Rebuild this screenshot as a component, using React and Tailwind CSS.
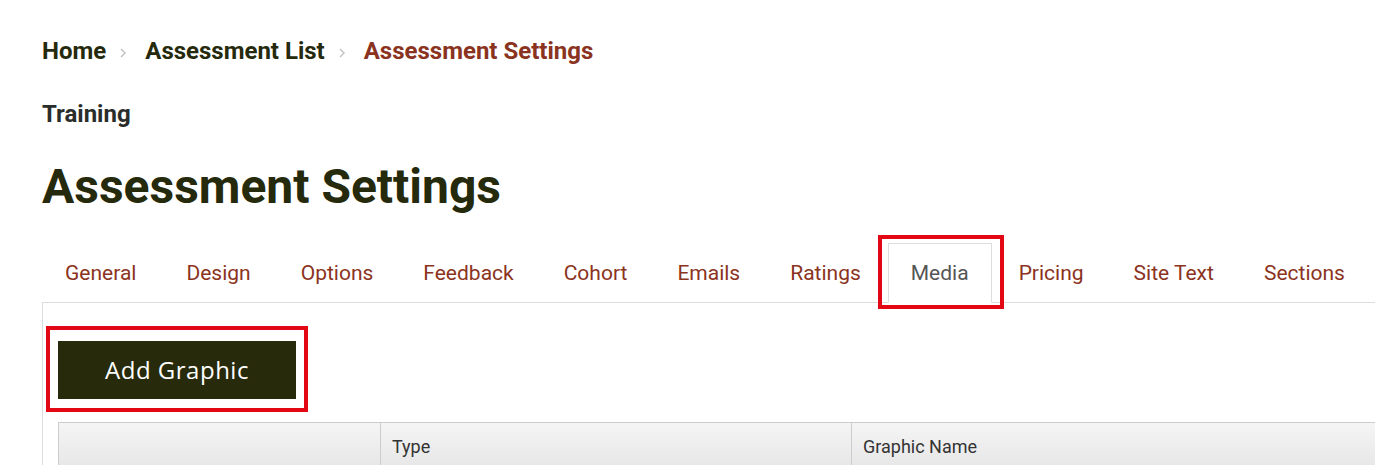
import React from "react";

const tabs = ["General", "Design", "Options", "Feedback", "Cohort", "Emails", "Ratings", "Media", "Pricing", "Site Text", "Sections"];

function Chevron() {
    return (
        <svg width="8" height="12" viewBox="0 0 8 12" className="ml-[13px] mr-[18px] mt-[3px]">
            <path d="M2 2l4 4-4 4" fill="none" stroke="#c4c4c4" strokeWidth="1.5" />
        </svg>
    );
}

export default function App() {
    return (
        <div className="w-[1375px] h-[465px] overflow-hidden bg-white font-['Roboto',sans-serif]">
            <div className="pl-[42px] w-[1500px]">
                <div className="flex items-center pt-[36px] text-[24px] font-bold leading-[30px]">
                    <span className="text-[#262a0c]">Home</span>
                    <Chevron />
                    <span className="text-[#262a0c]">Assessment List</span>
                    <Chevron />
                    <span className="text-[#8b3321]">Assessment Settings</span>
                </div>

                <p className="mt-[33px] text-[24px] font-bold leading-[30px] text-[#2b2d2a]">Training</p>

                <h1 className="mt-[30px] text-[48px] font-bold leading-[56px] text-[#262a0c]">Assessment Settings</h1>

                <div className="mt-[28px] flex border-b border-[#dddddd]">
                    {tabs.map((t) => (
                        <div key={t} className="relative mr-[4px] -mb-px">
                            <div
                                className={
                                    t === "Media"
                                        ? "border border-[#dddddd] border-b-white bg-white px-[22px] py-[15px] text-[21px] leading-[28px] text-[#555555]"
                                        : "border border-transparent px-[22px] py-[15px] text-[21px] leading-[28px] text-[#8b3321]"
                                }
                            >
                                {t}
                            </div>
                            {t === "Media" && (
                                <div className="absolute -left-[10px] -top-[8px] -right-[12px] -bottom-[6px] border-4 border-[#e30613]" />
                            )}
                        </div>
                    ))}
                </div>

                <div className="border-l border-[#dddddd] pl-[15px] pt-[38px] h-[200px]">
                    <div className="relative inline-block">
                        <button className="w-[238px] h-[58px] bg-[#272a0b] text-white text-[24px] font-['Open_Sans',sans-serif] tracking-[0.5px]">
                            Add Graphic
                        </button>
                        <div className="absolute -left-[12px] -top-[15px] -right-[12px] -bottom-[13px] border-4 border-[#e30613]" />
                    </div>

                    <div className="mt-[23px] flex border border-[#cccccc] bg-gradient-to-b from-[#f5f5f5] to-[#e6e6e6] h-[48px] text-[18px] text-[#333333]">
                        <div className="w-[322px] border-r border-[#cccccc]" />
                        <div className="w-[471px] border-r border-[#cccccc] px-[11px] pt-[10px]">Type</div>
                        <div className="flex-1 px-[11px] pt-[10px]">Graphic Name</div>
                    </div>
                </div>
            </div>
        </div>
    );
}
